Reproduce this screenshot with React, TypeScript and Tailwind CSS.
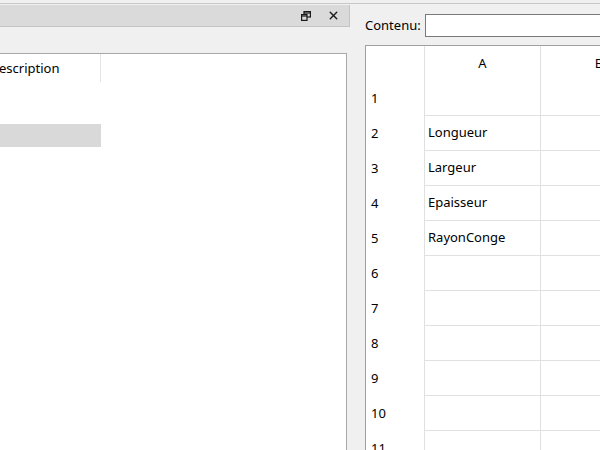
import { X } from "lucide-react";

const rows = ["", "Longueur", "Largeur", "Epaisseur", "RayonConge", "", "", "", "", "", ""];

// small "float" icon from the dock title bar
const FloatIcon = () => (
  <svg width="10" height="10" viewBox="0 0 10 10" fill="none" stroke="#1a1a1a" strokeWidth="1.2">
    <rect x="3" y="0.6" width="6.4" height="5.4" />
    <line x1="3" y1="2" x2="9.4" y2="2" />
    <rect x="0.6" y="3.6" width="5.4" height="5.8" fill="#dadada" />
    <line x1="0.6" y1="5" x2="6" y2="5" />
  </svg>
);

export default function App() {
  return (
    <div
      className="w-[600px] h-[450px] overflow-hidden bg-[#f0f0f0] text-[13px] text-black"
      style={{ fontFamily: '"Noto Sans", "Open Sans", sans-serif' }}
    >
      <div className="pt-[3px] h-full">
        <div className="border-t border-[#c8c8c8] h-full flex">
          {/* left dock */}
          <div className="w-[350px] flex flex-col shrink-0">
            <div className="mt-px h-[22px] bg-[#dadada] border-b border-r border-[#c4c4c4] flex items-center justify-end gap-[16px] pr-[9px]">
              <FloatIcon />
              <X size={13} strokeWidth={2.6} color="#1a1a1a" />
            </div>
            <div className="flex-1 pt-[26px] pr-[3px]">
              <div className="h-full bg-white border-t border-r border-[#a8a8a8] flex flex-col">
                <div className="h-[28px] flex">
                  <div className="w-[101px] border-r border-[#e5e5e5] flex items-center pt-[2px] overflow-hidden">
                    <span className="-ml-[1px]">escription</span>
                  </div>
                </div>
                <div className="h-[42px]" />
                <div className="h-[23px] w-[101px] bg-[#d9d9d9]" />
              </div>
            </div>
          </div>

          {/* right dock */}
          <div className="flex-1 flex flex-col pl-[15px]">
            <div className="h-[34px] pt-[10px] flex items-start">
              <span className="w-[60px] leading-[23px]">Contenu:</span>
              <div className="flex-1 h-[23px] bg-white border border-[#7a7a7a] -mr-[4px]" />
            </div>
            <div className="flex-1 mt-[8px] bg-white border-t border-l border-[#a0a0a0] flex flex-col">
              <div className="h-[35px] flex shrink-0">
                <div className="w-[58px]" />
                <div className="w-[116px] border-l border-[#e0e0e0] flex items-center justify-center">A</div>
                <div className="w-[117px] border-l border-[#e0e0e0] flex items-center justify-center">B</div>
              </div>
              {rows.map((r, i) => (
                <div key={i} className="h-[35px] flex shrink-0">
                  <div className="w-[58px] flex items-center pl-[5px]">{i + 1}</div>
                  <div className="w-[116px] border-l border-b border-[#e0e0e0] flex items-center pl-[3px]">{r}</div>
                  <div className="w-[117px] border-l border-b border-[#e0e0e0]" />
                </div>
              ))}
            </div>
          </div>
        </div>
      </div>
    </div>
  );
}
